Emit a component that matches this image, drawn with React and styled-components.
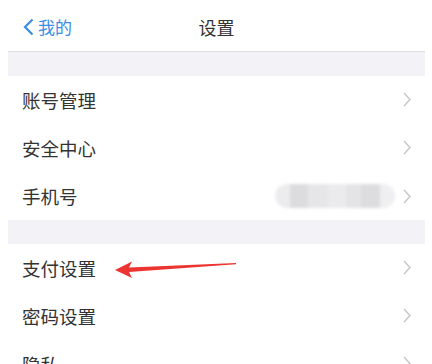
import styled, { createGlobalStyle } from "styled-components";

const GlobalStyle = createGlobalStyle`
  html, body {
    margin: 0;
    padding: 0;
    background: #fff;
    overflow: hidden;
  }
  body {
    font-family: "Noto Sans CJK SC", "Noto Sans", sans-serif;
  }
`;

const Page = styled.div`
  padding: 0 7px 0 8px;
  background: #fff;
`;

const NavBar = styled.div`
  position: relative;
  height: 51px;
  display: flex;
  align-items: center;
  justify-content: center;
  border-bottom: 1px solid #dcdce0;
  background: #fff;
`;

const BackButton = styled.div`
  position: absolute;
  left: 15px;
  top: 0;
  bottom: 0;
  display: flex;
  align-items: center;
  gap: 4px;
  color: #3b8de0;
  font-size: 17px;
  padding-top: 2px;
`;

const Title = styled.div`
  font-size: 18px;
  color: #333;
  padding-top: 2px;
`;

const GroupGap = styled.div`
  height: ${(p) => p.h}px;
  background: #f3f3f7;
`;

const Row = styled.div`
  position: relative;
  height: 48px;
  display: flex;
  align-items: center;
  padding-left: 14px;
  background: #fff;
`;

const RowInner = styled.div`
  flex: 1;
  height: 100%;
  display: flex;
  align-items: center;
  padding-right: 14px;
  border-bottom: ${(p) => (p.last ? "none" : "1px solid #ececef")};
`;

const Label = styled.div`
  flex: 1;
  font-size: 18.5px;
  color: #333;
`;

const Blurred = styled.div`
  display: flex;
  width: 120px;
  height: 24px;
  margin-right: 8px;
  border-radius: 12px;
  overflow: hidden;
  filter: blur(1.5px);
`;

const BlurBlock = styled.div`
  flex: ${(p) => p.w};
  background: ${(p) => p.c};
`;

const ArrowMark = styled.svg`
  position: absolute;
  left: 100px;
  top: 13px;
  pointer-events: none;
`;

const Chevron = () => (
  <svg width="8" height="15" viewBox="0 0 8 15">
    <path d="M1 1 L7 7.5 L1 14" fill="none" stroke="#c5c5ca" strokeWidth="1.4" />
  </svg>
);

const BackIcon = () => (
  <svg width="11" height="18" viewBox="0 0 11 18">
    <path d="M9.5 1.5 L2 9 L9.5 16.5" fill="none" stroke="#3b8de0" strokeWidth="2.2" />
  </svg>
);

const phoneBlur = [
  [1, "#ececee"],
  [1.2, "#dcdcde"],
  [1.3, "#e6e6e8"],
  [1.2, "#ebebed"],
  [1, "#e4e4e6"],
  [1.3, "#dddddf"],
  [1, "#efeff1"],
];

const SettingRow = ({ label, last, children }) => (
  <Row>
    <RowInner last={last}>
      <Label>{label}</Label>
      {children}
      <Chevron />
    </RowInner>
  </Row>
);

export default function App() {
  return (
    <Page>
      <GlobalStyle />
      <NavBar>
        <BackButton>
          <BackIcon />
          我的
        </BackButton>
        <Title>设置</Title>
      </NavBar>
      <GroupGap h={24} />
      <SettingRow label="账号管理" />
      <SettingRow label="安全中心" />
      <SettingRow label="手机号" last>
        <Blurred>
          {phoneBlur.map(([w, c], i) => (
            <BlurBlock key={i} w={w} c={c} />
          ))}
        </Blurred>
      </SettingRow>
      <GroupGap h={24} />
      <Row>
        <RowInner>
          <Label>支付设置</Label>
          <Chevron />
        </RowInner>
        <ArrowMark width="135" height="24" viewBox="0 0 135 24">
          <path
            d="M7 13 L24 4.5 L21 10.5 L128 6 L128 7.2 L21 15 L24 21 Z"
            fill="#ec3431"
          />
        </ArrowMark>
      </Row>
      <SettingRow label="密码设置" />
      <SettingRow label="隐私" />
    </Page>
  );
}
